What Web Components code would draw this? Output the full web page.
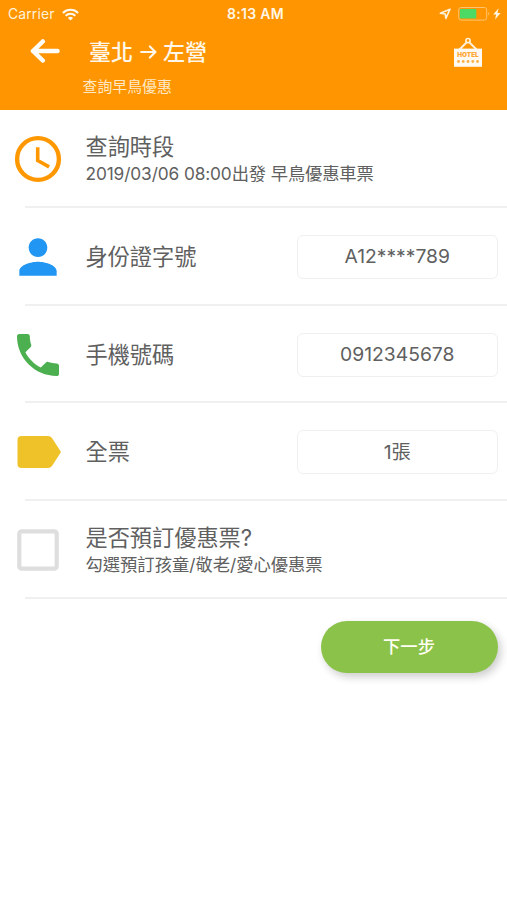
<!DOCTYPE html>
<html lang="zh-Hant">
<head>
<meta charset="utf-8">
<title>查詢早鳥優惠</title>
<style>
html,body{margin:0;background:#fff}
body{height:900px;overflow:hidden;font-family:Inter,"Noto Sans CJK TC",sans-serif;color:#606060}
</style>
</head>
<body>
<booking-page></booking-page>
<script>
const define = (name, html) => customElements.define(name, class extends HTMLElement {
  constructor() {
    super();
    const t = document.createElement('template');
    t.innerHTML = html;
    this.attachShadow({mode: 'open'}).appendChild(t.content.cloneNode(true));
  }
});

define('status-bar', `
<style>
:host{display:grid;grid-template-columns:1fr auto 1fr;align-items:center;height:28px;padding:0 4px 0 8px;box-sizing:border-box;color:#fff2dc;font-size:13.9px;line-height:28px}
.l,.r{display:flex;align-items:center}
.l{gap:7px;letter-spacing:.15px}
.r{justify-content:flex-end}
.time{font-weight:600;font-size:14px;letter-spacing:.3px;color:#fff6e6}
svg{display:block}
</style>
<div class="l"><span>Carrier</span>
<svg width="17" height="13" viewBox="0 0 17 13" fill="none" stroke="#fffaf0" stroke-width="2.1"><path d="M.9 4.900a10.800 10.800 0 0 1 15.200 0M3.700 7.700a6.800 6.800 0 0 1 9.600 0"/><path d="M8.500 12.600 5.900 9.900a3.800 3.800 0 0 1 5.200 0z" fill="#fffaf0" stroke="none"/></svg></div>
<span class="time">8:13 AM</span>
<div class="r">
<svg width="64" height="16" viewBox="0 0 64 16"><path d="M1.300 7.300 11 3.200 6.900 12.300 6.200 8z" fill="none" stroke="#fff2dc" stroke-width="1.600" stroke-linejoin="round"/><rect x="19.700" y="1.500" width="28" height="12.600" rx="2.400" fill="none" stroke="#ffc56e"/><rect x="20.900" y="3" width="16.400" height="9.600" rx=".8" fill="#4cd964"/><path d="M49.300 5.800q2 2 0 4z" fill="#ffc56e"/><path d="M59.600 2.200 54.200 8.500h3L56 13.400 61.600 7h-3.200z" fill="#fff6e6"/></svg>
</div>`);

define('app-header', `
<style>
:host{display:grid;grid-template-rows:28px 46px 36px;height:109.5px;background:#ff9500;color:#fff;overflow:hidden}
.bar{display:flex;align-items:center;padding:0 24px 0 30px}
.back{flex:none;margin-top:-1px}
h1{flex:1;margin:2px 0 0 29px;font:500 22px/30px Inter,"Noto Sans CJK TC",sans-serif;color:#fff8ea;white-space:nowrap;display:flex;align-items:center}
h1 svg{margin:0 6px 0 7px}
.hotel{flex:none;margin-top:3px}
p{margin:1.5px 0 0 82.5px;font-size:14.900px;line-height:22px;color:#ffe9c6}
svg{display:block}
</style>
<status-bar></status-bar>
<div class="bar">
<svg class="back" width="30" height="26" viewBox="0 0 30 26" fill="none" stroke="#fffdf8" stroke-width="4.500" stroke-linecap="round" stroke-linejoin="round"><path d="M27.500 13H3M12.800 3.500 3 13 12.800 22.500"/></svg>
<h1><span>臺北</span><svg width="17" height="14" viewBox="0 0 17 14" fill="none" stroke="#fff8ea" stroke-width="2.200" stroke-linecap="round" stroke-linejoin="round"><path d="M1.200 7h14M9.900 1.500 15.400 7 9.900 12.500"/></svg><span>左營</span></h1>
<svg class="hotel" width="30" height="31" viewBox="0 0 30 31"><path d="M6.500 12.500 14 5M23.500 12.500 16 5" stroke="#fff1d7" stroke-width="1.900"/><circle cx="15" cy="3.600" r="2.100" fill="none" stroke="#fff1d7" stroke-width="1.700"/><path d="M1 11.600h28v18.200H1z" fill="#fffaf1"/><text x="15" y="20.200" text-anchor="middle" textLength="21.500" lengthAdjust="spacingAndGlyphs" font-family="Inter" font-size="6.500" font-weight="900" fill="#ffa838">HOTEL</text><g fill="#ffb04a"><circle cx="5.500" cy="24.500" r="1.400"/><circle cx="10.200" cy="24.500" r="1.400"/><circle cx="15" cy="24.500" r="1.400"/><circle cx="19.800" cy="24.500" r="1.400"/><circle cx="24.500" cy="24.500" r="1.400"/></g></svg>
</div>
<p>查詢早鳥優惠</p>`);

define('form-row', `
<style>
:host{display:grid;grid-template-columns:76px 1fr auto;align-items:center;height:97.750px;box-sizing:border-box;padding-right:9px;background:linear-gradient(#f0f0f0,#f0f0f0) 25px 100%/100% 2px no-repeat}
.icon{display:flex;justify-content:center}
.text{padding-left:9.500px;white-space:nowrap}
.title{font-size:22.200px;line-height:30px}
.sub{display:block;font-size:17.300px;line-height:24px}
</style>
<div class="icon"><slot name="icon"></slot></div>
<div class="text"><div class="title"><slot></slot></div><div class="sub"><slot name="sub"></slot></div></div>
<slot name="value"></slot>`);

define('value-box', `
<style>
:host{display:flex;align-items:center;justify-content:center;width:201.500px;height:44px;box-sizing:border-box;border:1.500px solid #f0f0f0;border-radius:6px;font-size:19.300px;line-height:26px;padding-bottom:1px}
</style><slot></slot>`);

define('next-button', `
<style>
:host{display:block}
button{display:block;width:177px;height:52px;border:0;border-radius:26px;background:#8bc34a;color:#fffff4;font:500 17.300px/52px Inter,"Noto Sans CJK TC",sans-serif;padding:0;box-shadow:3px 4px 8px rgba(0,0,0,.2)}
</style><button type="button"><slot></slot></button>`);

define('booking-page', `
<style>
:host{display:block}
svg{display:block}
main{padding-top:.7px}
.actions{display:flex;justify-content:flex-end;padding:22px 9.500px 0 0}
.s1{letter-spacing:-.12px}
.tag{margin-left:2px}
</style>
<app-header></app-header>
<main>
<form-row>
<svg slot="icon" width="48" height="48" viewBox="0 0 48 48" fill="none" stroke="#ff9800"><circle cx="24" cy="24" r="20.900" stroke-width="4.400"/><path d="M23.700 12.300v13.200l11.400 6.400" stroke-width="3.600"/></svg>
查詢時段<span slot="sub" class="s1">2019/03/06 08:00出發 早鳥優惠車票</span>
</form-row>
<form-row>
<svg slot="icon" width="56" height="56" viewBox="0 0 24 24" fill="#2196f3"><path d="M12 12c2.200 0 4-1.800 4-4s-1.800-4-4-4-4 1.800-4 4 1.800 4 4 4zm0 2c-2.700 0-8 1.300-8 4v2h16v-2c0-2.700-5.300-4-8-4z"/></svg>
身份證字號<value-box slot="value">A12****789</value-box>
</form-row>
<form-row>
<svg slot="icon" width="56" height="56" viewBox="0 0 24 24" fill="#4caf50"><path d="M6.600 10.800c1.400 2.800 3.800 5.100 6.600 6.600l2.200-2.200c.3-.3.7-.4 1-.2 1.100.4 2.300.6 3.600.6.6 0 1 .4 1 1V20c0 .6-.4 1-1 1C10.600 21 3 13.400 3 4c0-.6.4-1 1-1h3.500c.6 0 1 .4 1 1 0 1.200.2 2.500.6 3.600.1.300 0 .7-.2 1l-2.300 2.200z"/></svg>
手機號碼<value-box slot="value">0912345678</value-box>
</form-row>
<form-row>
<svg slot="icon" class="tag" width="44" height="34" viewBox="0 0 44 34" fill="#efc22a"><path d="M4.500 1h26.600q2.400 0 3.900 1.900L44 17l-9 14.100q-1.500 1.900-3.900 1.900H4.500Q.5 33 .5 29V5Q.5 1 4.500 1z"/></svg>
全票<value-box slot="value">1張</value-box>
</form-row>
<form-row>
<svg slot="icon" width="42" height="42" viewBox="0 0 42 42"><rect x="2.300" y="2.300" width="37.400" height="37.400" rx="2.500" fill="none" stroke="#dedede" stroke-width="4.200"/></svg>
是否預訂優惠票?<span slot="sub">勾選預訂孩童/敬老/愛心優惠票</span>
</form-row>
<div class="actions"><next-button>下一步</next-button></div>
</main>`);
</script>
</body>
</html>
